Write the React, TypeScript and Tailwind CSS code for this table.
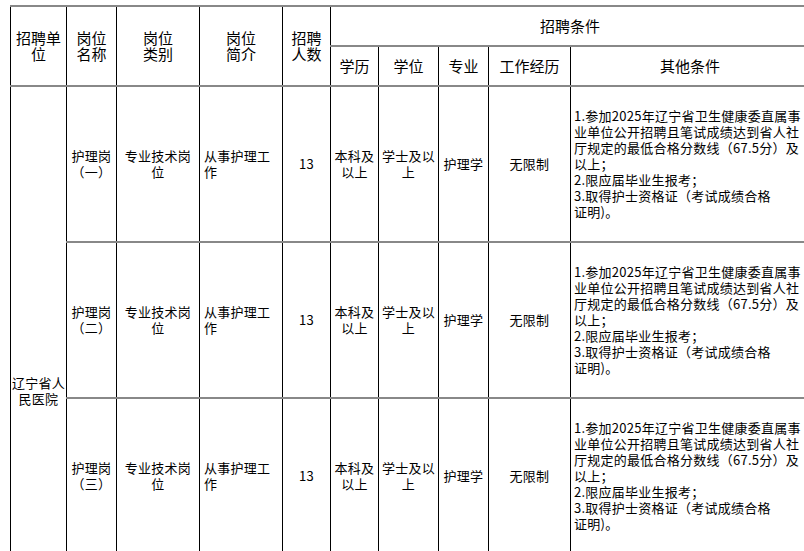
import React from "react";

// ---------------------------------------------------------------------------
// Table data
// ---------------------------------------------------------------------------
const colWidths = [56, 50, 83, 83, 48, 48, 60, 50, 82, 239];

const positions = ["（一）", "（二）", "（三）"];

const otherConditions = [
  "1.参加2025年辽宁省卫生健康委直属事",
  "业单位公开招聘且笔试成绩达到省人社",
  "厅规定的最低合格分数线（67.5分）及",
  "以上；",
  "2.限应届毕业生报考；",
  "3.取得护士资格证（考试成绩合格",
  "证明)。",
];

// horizontal rules are grey 2px, vertical rules black 1px
const line = "border-x border-y-2 border-x-black border-y-[#888] p-0";
const head = `${line} font-normal text-[15px] leading-[16px] text-center align-middle`;
const body = `${line} text-[13px] leading-[16px] tracking-[0.25px] align-middle`;

function Lines({ lines }: { lines: string[] }) {
  return (
    <>
      {lines.map((l, i) => (
        <div key={i} className="whitespace-nowrap">
          {l}
        </div>
      ))}
    </>
  );
}

export default function App() {
  return (
    <div className="h-[551px] w-[804px] overflow-hidden bg-white font-['Noto_Sans_CJK_SC',sans-serif] text-black">
      <table className="ml-[10px] mt-[5px] table-fixed border-collapse w-[799px]">
        <colgroup>
          {colWidths.map((w, i) => (
            <col key={i} style={{ width: w }} />
          ))}
        </colgroup>
        <thead>
          <tr className="h-[40px]">
            <th rowSpan={2} className={head}>
              <Lines lines={["招聘单", "位"]} />
            </th>
            <th rowSpan={2} className={head}>
              <Lines lines={["岗位", "名称"]} />
            </th>
            <th rowSpan={2} className={head}>
              <Lines lines={["岗位", "类别"]} />
            </th>
            <th rowSpan={2} className={head}>
              <Lines lines={["岗位", "简介"]} />
            </th>
            <th rowSpan={2} className={head}>
              <Lines lines={["招聘", "人数"]} />
            </th>
            <th colSpan={5} className={head}>
              招聘条件
            </th>
          </tr>
          <tr className="h-[40px]">
            <th className={head}>学历</th>
            <th className={head}>学位</th>
            <th className={head}>专业</th>
            <th className={head}>工作经历</th>
            <th className={head}>其他条件</th>
          </tr>
        </thead>
        <tbody>
          {positions.map((p, i) => (
            <tr key={i} className="h-[156px]">
              {i === 0 && (
                <td rowSpan={3} className={`${body} !align-top text-center pt-[288px]`}>
                  <Lines lines={["辽宁省人", "民医院"]} />
                </td>
              )}
              <td className={`${body} text-center`}>
                <Lines lines={["护理岗", p]} />
              </td>
              <td className={`${body} text-center`}>
                <Lines lines={["专业技术岗", "位"]} />
              </td>
              <td className={`${body} text-left pl-[4px]`}>
                <Lines lines={["从事护理工", "作"]} />
              </td>
              <td className={`${body} text-center`}>13</td>
              <td className={`${body} text-center`}>
                <Lines lines={["本科及", "以上"]} />
              </td>
              <td className={`${body} text-center`}>
                <Lines lines={["学士及以", "上"]} />
              </td>
              <td className={`${body} text-center`}>护理学</td>
              <td className={`${body} text-center`}>无限制</td>
              <td className={`${body} text-left pl-[3px]`}>
                <Lines lines={otherConditions} />
              </td>
            </tr>
          ))}
        </tbody>
      </table>
    </div>
  );
}
